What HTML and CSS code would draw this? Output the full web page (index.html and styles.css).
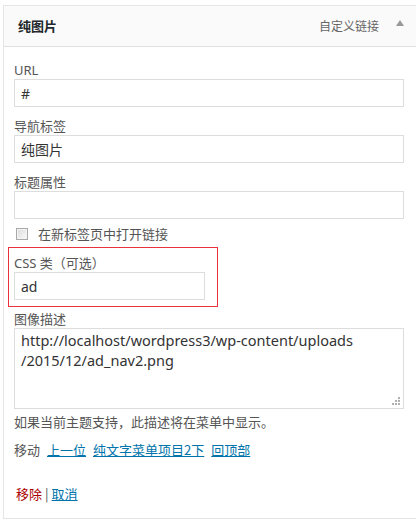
FILE: index.html
```html
<!DOCTYPE html>
<html lang="zh-CN">
<head>
<meta charset="utf-8">
<link rel="stylesheet" href="styles.css">
</head>
<body>
<div class="panel">
  <div class="head">
    <span class="title">纯图片</span>
    <span class="type">自定义链接</span>
    <span class="arrow"></span>
  </div>
  <div class="body">
    <div class="field">
      <label class="lbl">URL</label>
      <input class="inp wide" type="text" value="#">
    </div>
    <div class="field">
      <label class="lbl">导航标签</label>
      <input class="inp wide" type="text" value="纯图片">
    </div>
    <div class="field last">
      <label class="lbl">标题属性</label>
      <input class="inp wide" type="text" value="">
    </div>
    <div class="check-row">
      <span class="checkbox"></span>
      <span class="check-text">在新标签页中打开链接</span>
    </div>
    <div class="highlight">
      <label class="lbl">CSS 类（可选）</label>
      <input class="inp narrow" type="text" value="ad">
    </div>
    <div class="field desc">
      <label class="lbl">图像描述</label>
      <div class="textarea">http://localhost/wordpress3/wp-content/uploads<br>/2015/12/ad_nav2.png
        <svg class="grip" width="9" height="9" viewBox="0 0 9 9"><g fill="#b0b0b0"><rect x="7" y="1" width="2" height="2"/><rect x="4" y="4" width="2" height="2"/><rect x="7" y="4" width="2" height="2"/><rect x="1" y="7" width="2" height="2"/><rect x="4" y="7" width="2" height="2"/><rect x="7" y="7" width="2" height="2"/></g></svg>
      </div>
    </div>
    <p class="help">如果当前主题支持，此描述将在菜单中显示。</p>
    <p class="move"><span>移动</span><a href="#">上一位</a><a href="#">纯文字菜单项目2下</a><a href="#">回顶部</a></p>
    <p class="actions"><a class="remove" href="#">移除</a><span class="sep">|</span><a class="cancel" href="#">取消</a></p>
  </div>
</div>
</body>
</html>
```
FILE: styles.css
```css
html, body {
  margin: 0;
  padding: 0;
  background: #fff;
}
body {
  padding-top: 5px;
  font-family: "Noto Sans", "Noto Sans CJK SC", sans-serif;
  font-size: 13px;
  color: #555;
}
.panel {
  margin-left: 3px;
  border: 1px solid #e5e5e5;
  border-right: none;
  background: #fff;
}
.head {
  height: 40px;
  background: #fafafa;
  border-bottom: 1px solid #e1e1e1;
  display: flex;
  align-items: center;
  padding: 0 12px 0 14px;
}
.title {
  font-family: "Noto Sans CJK SC", sans-serif;
  font-size: 13px;
  font-weight: bold;
  color: #23282d;
  line-height: 18px;
}
.type {
  margin-left: auto;
  font-family: "Noto Sans CJK SC", sans-serif;
  font-size: 12px;
  color: #666;
  line-height: 18px;
}
.arrow {
  margin-left: 17px;
  margin-top: -6px;
  width: 0;
  height: 0;
  border-left: 4px solid transparent;
  border-right: 4px solid transparent;
  border-bottom: 6px solid #999;
}
.body {
  padding: 14px 0 15px 10px;
}
.lbl {
  display: block;
  font-size: 13px;
  line-height: 18px;
  color: #555;
}
.field {
  margin-bottom: 10px;
}
.field.last {
  margin-bottom: 6px;
}
.inp {
  display: block;
  box-sizing: border-box;
  height: 28px;
  margin: 0;
  border: 1px solid #ddd;
  padding: 0 6px;
  font-family: "Noto Sans", "Noto Sans CJK SC", sans-serif;
  font-size: 14px;
  color: #333;
  background: #fff;
  outline: none;
}
.wide { width: 390px; }
.narrow { width: 191px; }
.check-row {
  display: flex;
  align-items: center;
  height: 18px;
  padding-left: 2px;
}
.checkbox {
  box-sizing: border-box;
  width: 12px;
  height: 12px;
  border: 1px solid #a9a9a9;
  background: linear-gradient(135deg, #dcdcdc, #fafafa);
  box-shadow: inset 0 0 0 1px #f4f4f4;
}
.check-text {
  margin-left: 10px;
  font-family: "Noto Sans CJK SC", sans-serif;
  line-height: 18px;
}
.highlight {
  width: 210px;
  box-sizing: border-box;
  margin: 4px 0 0 -6px;
  padding: 6px 0 6px 5px;
  border: 1px solid #e8333a;
}
.field.desc {
  margin: 3px 0 0 0;
}
.textarea {
  position: relative;
  box-sizing: border-box;
  width: 390px;
  height: 81px;
  border: 1px solid #ddd;
  padding: 1px 6px;
  font-size: 14.5px;
  line-height: 20px;
  color: #333;
}
.grip {
  position: absolute;
  right: 3px;
  bottom: 3px;
}
.help {
  margin: 4px 0 0;
  line-height: 18px;
  color: #555;
  font-family: "Noto Sans CJK SC", sans-serif;
}
.move {
  display: flex;
  gap: 7px;
  margin: 10px 0 0;
  line-height: 18px;
  font-family: "Noto Sans CJK SC", sans-serif;
  color: #555;
}
.move a {
  color: #0073aa;
  text-decoration: underline;
}
.actions {
  margin: 26px 0 0 2px;
  line-height: 18px;
  font-family: "Noto Sans CJK SC", sans-serif;
}
.remove {
  color: #a00;
  text-decoration: none;
}
.sep {
  color: #555;
  margin: 0 3px 0 3px;
}
.cancel {
  color: #0073aa;
  text-decoration: underline;
}
```
